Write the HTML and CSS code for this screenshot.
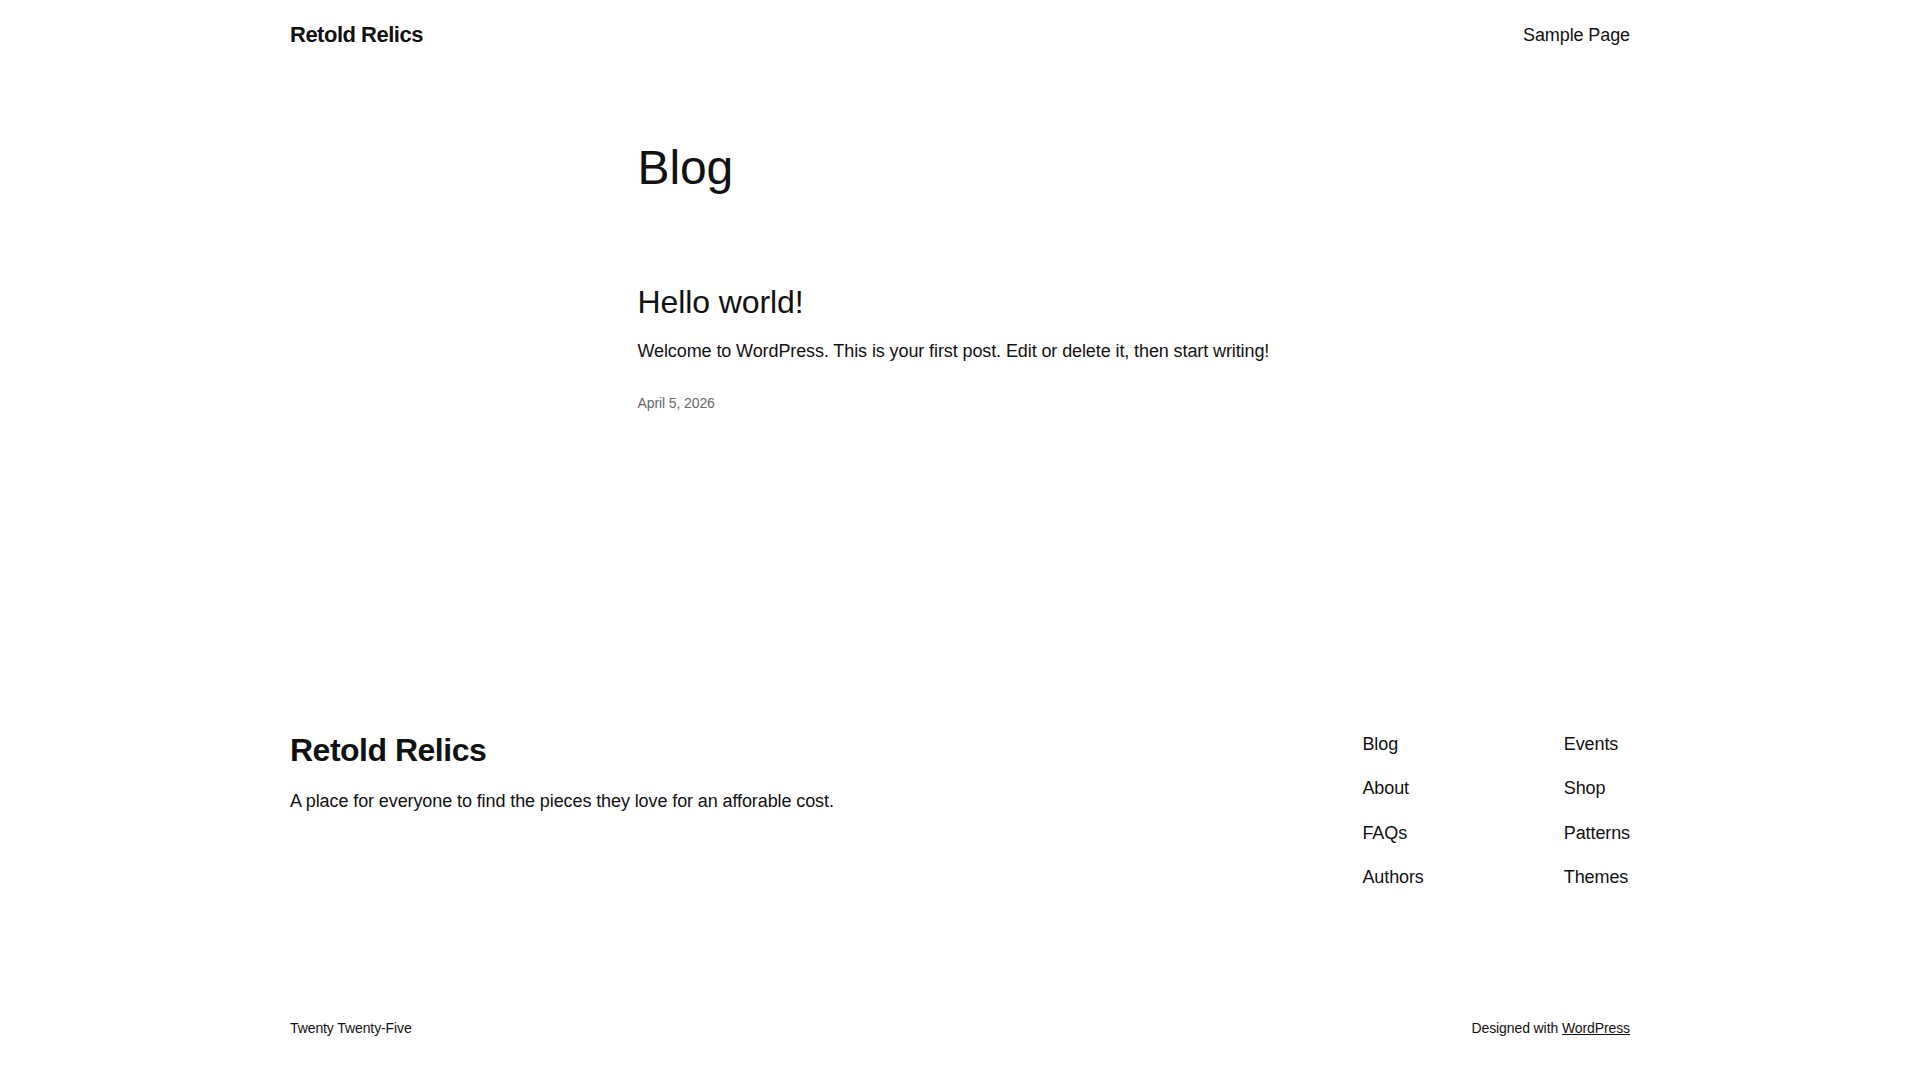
FILE: index.html
```html
<!DOCTYPE html>
<html lang="en">
<head>
<meta charset="utf-8">
<title>Blog – Retold Relics</title>
<link rel="stylesheet" href="styles.css">
</head>
<body>
<header class="site-header">
  <a class="site-title" href="#">Retold Relics</a>
  <nav class="header-nav"><a href="#">Sample Page</a></nav>
</header>
<main class="content">
  <h1 class="page-title">Blog</h1>
  <article class="post">
    <h2 class="post-title"><a href="#">Hello world!</a></h2>
    <p class="post-excerpt">Welcome to WordPress. This is your first post. Edit or delete it, then start writing!</p>
    <div class="post-date">April 5, 2026</div>
  </article>
</main>
<footer class="site-footer">
  <div class="footer-top">
    <div class="footer-brand">
      <a class="footer-title" href="#">Retold Relics</a>
      <p class="footer-tagline">A place for everyone to find the pieces they love for an afforable cost.</p>
    </div>
    <div class="footer-navs">
      <ul class="footer-nav">
        <li><a href="#">Blog</a></li>
        <li><a href="#">About</a></li>
        <li><a href="#">FAQs</a></li>
        <li><a href="#">Authors</a></li>
      </ul>
      <ul class="footer-nav">
        <li><a href="#">Events</a></li>
        <li><a href="#">Shop</a></li>
        <li><a href="#">Patterns</a></li>
        <li><a href="#">Themes</a></li>
      </ul>
    </div>
  </div>
  <div class="footer-bottom">
    <span>Twenty Twenty-Five</span>
    <span>Designed with <a class="credit" href="#">WordPress</a></span>
  </div>
</footer>
</body>
</html>
```

FILE: styles.css
```css
html, body {
  margin: 0;
  padding: 0;
  background: #ffffff;
}

body {
  font-family: "Liberation Sans", Arial, sans-serif;
  color: #111111;
  font-size: 18px;
  line-height: 1.4;
  letter-spacing: -0.1px;
}

a {
  color: inherit;
  text-decoration: none;
}

.site-header {
  width: 1340px;
  margin: 0 auto;
  padding-top: 20px;
  display: flex;
  justify-content: space-between;
  align-items: center;
}

.site-title {
  font-size: 22px;
  font-weight: 700;
  letter-spacing: -0.5px;
  line-height: 1.4;
}

.header-nav {
  font-size: 18px;
  line-height: 1.4;
}

.content {
  width: 645px;
  margin: 0 auto;
}

.page-title {
  margin: 88.5px 0 0;
  font-size: 48px;
  font-weight: 400;
  line-height: 1.2;
}

.post {
  margin-top: 86.5px;
}

.post-title {
  margin: 0;
  font-size: 32px;
  font-weight: 400;
  line-height: 1.2;
}

.post-excerpt {
  margin: 17.2px 0 0;
  font-size: 18px;
  line-height: 1.4;
}

.post-date {
  margin-top: 30px;
  font-size: 14px;
  line-height: 1.4;
  color: #686868;
}

.site-footer {
  width: 1340px;
  margin: 317px auto 0;
}

.footer-top {
  display: flex;
  justify-content: space-between;
  align-items: flex-start;
}

.footer-title {
  display: block;
  font-size: 32px;
  font-weight: 700;
  letter-spacing: -0.5px;
  line-height: 1.2;
}

.footer-tagline {
  margin: 19.5px 0 0;
  font-size: 18px;
  line-height: 1.4;
}

.footer-navs {
  display: flex;
  gap: 140px;
  margin-top: 1px;
}

.footer-nav {
  list-style: none;
  margin: 0;
  padding: 0;
  display: flex;
  flex-direction: column;
  gap: 19.3px;
  font-size: 18px;
  line-height: 1.4;
}

.footer-bottom {
  margin-top: 129px;
  padding-bottom: 40px;
  display: flex;
  justify-content: space-between;
  font-size: 14px;
  line-height: 1.4;
}

.credit {
  text-decoration: underline;
}
```
